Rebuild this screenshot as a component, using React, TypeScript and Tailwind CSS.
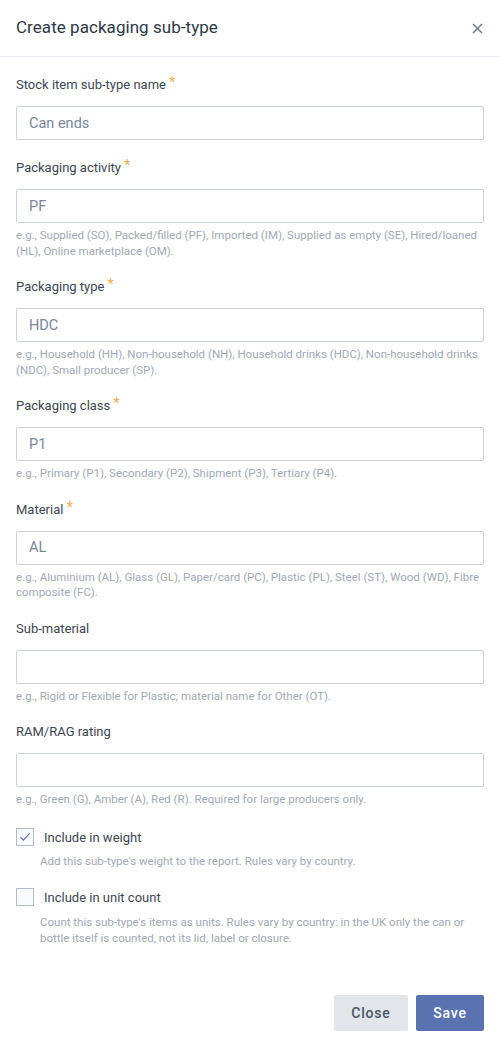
import { useState } from "react"

type Field = {
  label: string
  value: string
  required?: boolean
  hint?: string
}

const fields: Field[] = [
  { label: "Stock item sub-type name", value: "Can ends", required: true },
  {
    label: "Packaging activity",
    value: "PF",
    required: true,
    hint: "e.g., Supplied (SO), Packed/filled (PF), Imported (IM), Supplied as empty (SE), Hired/loaned (HL), Online marketplace (OM).",
  },
  {
    label: "Packaging type",
    value: "HDC",
    required: true,
    hint: "e.g., Household (HH), Non-household (NH), Household drinks (HDC), Non-household drinks (NDC), Small producer (SP).",
  },
  {
    label: "Packaging class",
    value: "P1",
    required: true,
    hint: "e.g., Primary (P1), Secondary (P2), Shipment (P3), Tertiary (P4).",
  },
  {
    label: "Material",
    value: "AL",
    required: true,
    hint: "e.g., Aluminium (AL), Glass (GL), Paper/card (PC), Plastic (PL), Steel (ST), Wood (WD), Fibre composite (FC).",
  },
  {
    label: "Sub-material",
    value: "",
    hint: "e.g., Rigid or Flexible for Plastic; material name for Other (OT).",
  },
  {
    label: "RAM/RAG rating",
    value: "",
    hint: "e.g., Green (G), Amber (A), Red (R). Required for large producers only.",
  },
]

function Checkbox({ checked, onChange }: { checked: boolean; onChange: () => void }) {
  return (
    <button
      type="button"
      onClick={onChange}
      className="flex h-[18px] w-[18px] shrink-0 items-center justify-center border border-[#b4bcc8] bg-[#f8fafc]"
    >
      {checked && (
        <svg width="12" height="10" viewBox="0 0 12 10" fill="none">
          <path d="M1.5 5.2 4.4 8.2 10.6 1.4" stroke="#5a73b0" strokeWidth="1.2" />
        </svg>
      )}
    </button>
  )
}

export default function App() {
  const [values, setValues] = useState(fields.map((f) => f.value))
  const [inWeight, setInWeight] = useState(true)
  const [inUnits, setInUnits] = useState(false)

  return (
    <div className="min-h-[1046px] w-[500px] bg-white font-['Roboto',sans-serif]">
      {/* header */}
      <div className="flex h-[57px] items-center justify-between border-b border-[#e6e9ee] pl-4 pr-[17px]">
        <h2 className="text-[17px] tracking-[0.05px] text-[#2d3748]">Create packaging sub-type</h2>
        <button type="button" className="text-[#718096]">
          <svg width="11" height="11" viewBox="0 0 11 11">
            <path d="M1 1 10 10M10 1 1 10" stroke="currentColor" strokeWidth="1.6" />
          </svg>
        </button>
      </div>

      {/* body */}
      <div className="px-4 pt-[19px]">
        <div className="flex flex-col gap-[19px]">
          {fields.map((f, i) => (
            <div key={f.label}>
              <label className="flex h-[18px] items-start text-[13px] leading-[18px] text-[#3d4654]">
                {f.label}
                {f.required && (
                  <span className="ml-[3px] -mt-[3px] text-[15px] leading-[18px] text-[#f6ad55]">*</span>
                )}
              </label>
              <input
                value={values[i]}
                onChange={(e) => setValues(values.map((v, j) => (j === i ? e.target.value : v)))}
                className="mt-3 block h-[34px] w-full rounded-[2px] border border-[#cbd2dc] px-3 text-[14.5px] text-[#7a8699] outline-none"
              />
              {f.hint && (
                <p className="mt-[5px] text-[11.5px] leading-[15.5px] text-[#a0a9b6]">{f.hint}</p>
              )}
            </div>
          ))}
        </div>

        {/* checkboxes */}
        <div className="mt-[20px]">
          <div className="flex items-center gap-[10px]">
            <Checkbox checked={inWeight} onChange={() => setInWeight(!inWeight)} />
            <span className="text-[13px] text-[#3d4654]">Include in weight</span>
          </div>
          <p className="mt-[7px] pl-6 text-[11.5px] leading-[15.5px] text-[#a0a9b6]">
            Add this sub-type's weight to the report. Rules vary by country.
          </p>
        </div>
        <div className="mt-[18px]">
          <div className="flex items-center gap-[10px]">
            <Checkbox checked={inUnits} onChange={() => setInUnits(!inUnits)} />
            <span className="text-[13px] text-[#3d4654]">Include in unit count</span>
          </div>
          <p className="mt-[8px] pl-6 text-[11.5px] leading-[15.5px] text-[#a0a9b6]">
            Count this sub-type's items as units. Rules vary by country: in the UK only the can or bottle itself is counted, not its lid, label or closure.
          </p>
        </div>
      </div>

      {/* footer */}
      <div className="flex justify-end gap-2 px-4 pt-[49px] pb-[15px]">
        <button
          type="button"
          className="h-9 w-[74px] rounded-[2px] bg-[#e2e6ea] text-[14px] font-medium tracking-[0.8px] text-[#4a5568]"
        >
          Close
        </button>
        <button
          type="button"
          className="h-9 w-[68px] rounded-[2px] bg-[#5a73b0] text-[14px] font-medium tracking-[0.8px] text-white"
        >
          Save
        </button>
      </div>
    </div>
  )
}
